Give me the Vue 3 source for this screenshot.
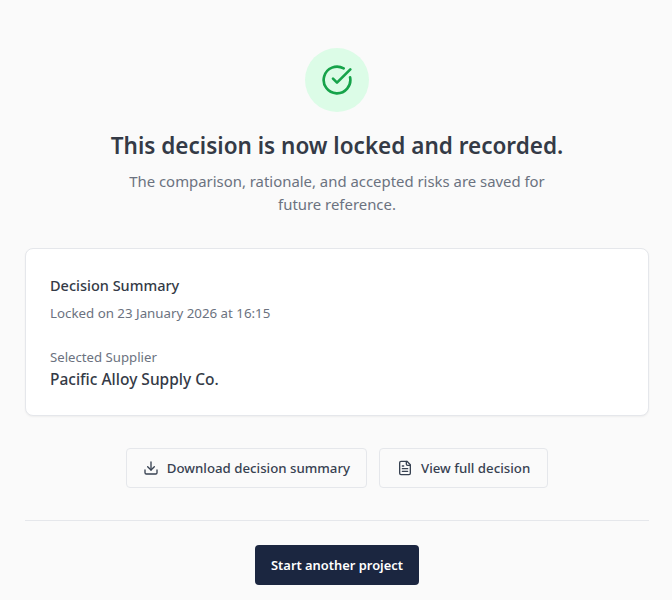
<template>
  <main class="page">
    <section class="hero">
      <div class="hero-icon">
        <svg width="32" height="32" viewBox="0 0 24 24" fill="none" stroke="#16a34a" stroke-width="2" stroke-linecap="round" stroke-linejoin="round">
          <path d="M21.8 10A10 10 0 1 1 17 3.34" />
          <path d="m9 11 3 3L22 4" />
        </svg>
      </div>
      <h1 class="title">This decision is now locked and recorded.</h1>
      <p class="subtitle">The comparison, rationale, and accepted risks are saved for future reference.</p>
    </section>

    <section class="card">
      <h2 class="card-title">Decision Summary</h2>
      <p class="card-date">Locked on 23 January 2026 at 16:15</p>
      <p class="card-label">Selected Supplier</p>
      <p class="card-value">Pacific Alloy Supply Co.</p>
    </section>

    <div class="actions">
      <button class="btn">
        <svg width="16" height="16" viewBox="0 0 24 24" fill="none" stroke="currentColor" stroke-width="2" stroke-linecap="round" stroke-linejoin="round">
          <path d="M12 15V3" />
          <path d="M21 15v4a2 2 0 0 1-2 2H5a2 2 0 0 1-2-2v-4" />
          <path d="m7 10 5 5 5-5" />
        </svg>
        Download decision summary
      </button>
      <button class="btn btn-view">
        <svg width="16" height="16" viewBox="0 0 24 24" fill="none" stroke="currentColor" stroke-width="2" stroke-linecap="round" stroke-linejoin="round">
          <path d="M15 2H6a2 2 0 0 0-2 2v16a2 2 0 0 0 2 2h12a2 2 0 0 0 2-2V7Z" />
          <path d="M14 2v4a2 2 0 0 0 2 2h4" />
          <path d="M10 9H8" />
          <path d="M16 13H8" />
          <path d="M16 17H8" />
        </svg>
        View full decision
      </button>
    </div>

    <div class="footer">
      <button class="btn-primary">Start another project</button>
    </div>
  </main>
</template>

<script setup>
</script>

<style>
html, body {
  background: #fafafa;
}
</style>

<style scoped>
.page {
  box-sizing: border-box;
  width: 672px;
  height: 600px;
  overflow: hidden;
  padding: 48px 23px 0 25px;
  background: #fafafa;
  font-family: "Noto Sans", "Open Sans", sans-serif;
  color: #374151;
}

.hero {
  display: flex;
  flex-direction: column;
  align-items: center;
  text-align: center;
}

.hero-icon {
  width: 64px;
  height: 64px;
  border-radius: 50%;
  background: #dcfce7;
  display: flex;
  align-items: center;
  justify-content: center;
}

.title {
  margin: 17px 0 0;
  font-size: 22.5px;
  line-height: 34px;
  font-weight: 600;
  color: #343a46;
}

.subtitle {
  margin: 7px 0 0;
  width: 448px;
  font-size: 14.9px;
  line-height: 23px;
  color: #6b7280;
}

.card {
  margin-top: 32px;
  height: 168px;
  box-sizing: border-box;
  padding: 24px 24px;
  background: #fff;
  border: 1px solid #e5e7eb;
  border-radius: 8px;
  box-shadow: 0 1px 2px rgba(0, 0, 0, 0.05);
}

.card-title {
  margin: 0;
  font-size: 14.5px;
  line-height: 24px;
  font-weight: 500;
  color: #343a46;
}

.card-date {
  margin: 6px 0 0;
  font-size: 13.3px;
  line-height: 20px;
  color: #6b7280;
}

.card-label {
  margin: 24px 0 0;
  font-size: 13.2px;
  line-height: 20px;
  color: #6b7280;
}

.card-value {
  margin: 0;
  font-size: 15.5px;
  line-height: 24px;
  font-weight: 500;
  color: #343a46;
}

.actions {
  margin-top: 32px;
  display: flex;
  justify-content: center;
  gap: 12px;
}

.btn {
  display: flex;
  align-items: center;
  gap: 8px;
  height: 40px;
  padding: 0 16px;
  background: #fafafa;
  border: 1px solid #e5e7eb;
  border-radius: 4px;
  font-family: inherit;
  font-size: 13.25px;
  font-weight: 500;
  color: #374151;
}

.btn-view {
  padding: 0 17px;
}

.footer {
  margin-top: 32px;
  padding-top: 24px;
  border-top: 1px solid #e5e7eb;
  display: flex;
  justify-content: center;
}

.btn-primary {
  height: 40px;
  padding: 0 16px;
  background: #1b2640;
  border: none;
  border-radius: 4px;
  font-family: inherit;
  font-size: 12.9px;
  font-weight: 600;
  color: #fff;
}
</style>
